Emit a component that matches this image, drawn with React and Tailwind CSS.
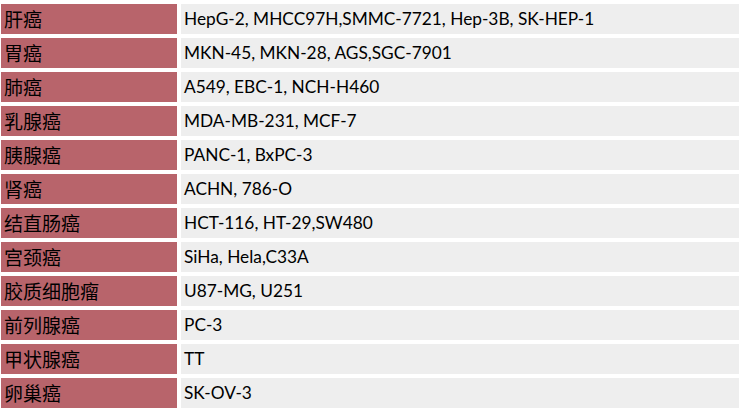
const rows = [
  ["肝癌", "HepG-2, MHCC97H,SMMC-7721, Hep-3B, SK-HEP-1"],
  ["胃癌", "MKN-45, MKN-28, AGS,SGC-7901"],
  ["肺癌", "A549, EBC-1, NCH-H460"],
  ["乳腺癌", "MDA-MB-231, MCF-7"],
  ["胰腺癌", "PANC-1, BxPC-3"],
  ["肾癌", "ACHN, 786-O"],
  ["结直肠癌", "HCT-116, HT-29,SW480"],
  ["宫颈癌", "SiHa, Hela,C33A"],
  ["胶质细胞瘤", "U87-MG, U251"],
  ["前列腺癌", "PC-3"],
  ["甲状腺癌", "TT"],
  ["卵巢癌", "SK-OV-3"],
];

export default function App() {
  return (
    <div className="w-[741px] h-[409px] bg-white pt-[4px] pl-[1px] pr-[2px]">
      <div className="flex flex-col gap-[4px]">
        {rows.map(([name, cells]) => (
          <div key={name} className="flex gap-[4px] h-[30px]">
            <div
              className="w-[176px] bg-[#b8646b] flex items-center pl-[3px] text-[19px] text-black"
              style={{ fontFamily: '"Noto Sans CJK SC", sans-serif' }}
            >
              {name}
            </div>
            <div
              className="flex-1 bg-[#eeeeee] flex items-center pl-[3px] text-[17.3px] text-black"
              style={{ fontFamily: 'Lato, "Noto Sans CJK SC", sans-serif' }}
            >
              {cells}
            </div>
          </div>
        ))}
      </div>
    </div>
  );
}
